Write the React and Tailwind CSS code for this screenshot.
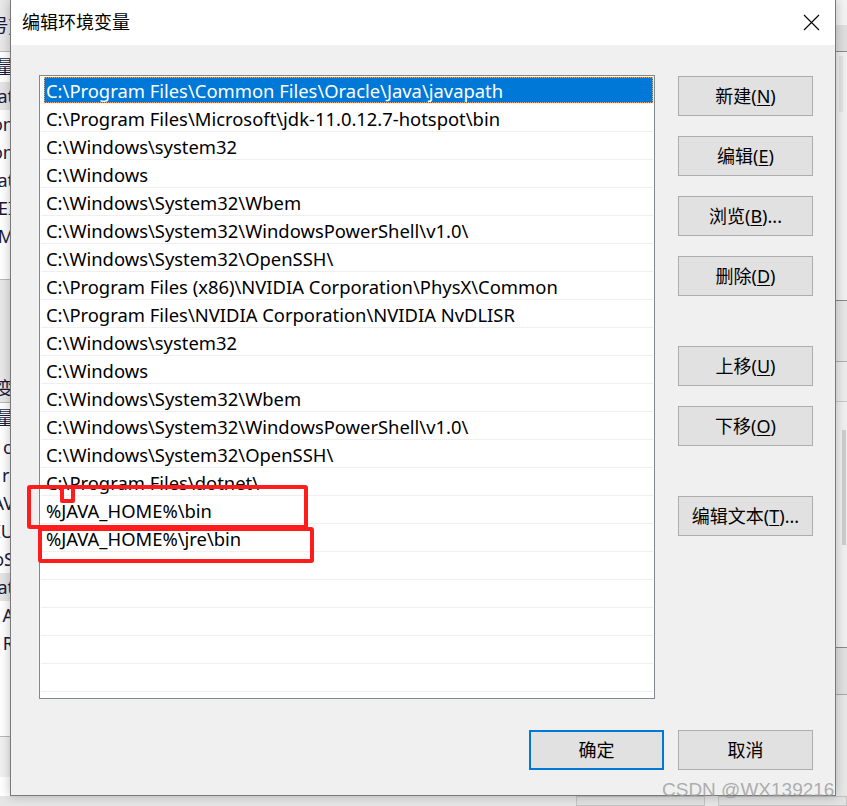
import React from 'react';

const PATHS = [
  'C:\\Program Files\\Common Files\\Oracle\\Java\\javapath',
  'C:\\Program Files\\Microsoft\\jdk-11.0.12.7-hotspot\\bin',
  'C:\\Windows\\system32',
  'C:\\Windows',
  'C:\\Windows\\System32\\Wbem',
  'C:\\Windows\\System32\\WindowsPowerShell\\v1.0\\',
  'C:\\Windows\\System32\\OpenSSH\\',
  'C:\\Program Files (x86)\\NVIDIA Corporation\\PhysX\\Common',
  'C:\\Program Files\\NVIDIA Corporation\\NVIDIA NvDLISR',
  'C:\\Windows\\system32',
  'C:\\Windows',
  'C:\\Windows\\System32\\Wbem',
  'C:\\Windows\\System32\\WindowsPowerShell\\v1.0\\',
  'C:\\Windows\\System32\\OpenSSH\\',
  'C:\\Program Files\\dotnet\\',
  '%JAVA_HOME%\\bin',
  '%JAVA_HOME%\\jre\\bin',
  '', '', '', '', '', '',
];

const SIDE_BUTTONS = [
  { label: '新建', key: 'N', gap: false },
  { label: '编辑', key: 'E', gap: false },
  { label: '浏览', key: 'B', tail: '...', gap: false },
  { label: '删除', key: 'D', gap: false },
  { label: '上移', key: 'U', gap: true },
  { label: '下移', key: 'O', gap: false },
  { label: '编辑文本', key: 'T', tail: '...', gap: true },
];

const FONT = "font-['Noto_Sans','Noto_Sans_CJK_SC',sans-serif]";

function WinButton({ children, primary, className = '' }) {
  return (
    <div
      className={`w-[135px] h-[40px] flex items-center justify-center bg-[#e1e1e1] text-[18px] text-black ${
        primary ? 'border-2 border-[#0078d7]' : 'border border-[#adadad]'
      } ${className}`}
    >
      {children}
    </div>
  );
}

function LeftStrip() {
  const rows = [
    { t: '号)', h: 52, bg: 'bg-[#e8e8e8]', line: true },
    { t: '变量', h: 30, bg: 'bg-white' },
    { t: 'at', h: 28, bg: 'bg-[#e5e5e5]' },
    { t: 'on', h: 28 },
    { t: 'on', h: 28 },
    { t: 'at', h: 28 },
    { t: 'EI', h: 28 },
    { t: 'M', h: 28 },
    { t: '', h: 30, line: true },
    { t: '', h: 95, bg: 'bg-[#e8e8e8]' },
    { t: '变', h: 28, bg: 'bg-[#e8e8e8]', line: true },
    { t: '变量', h: 30 },
    { t: 'o', h: 28 },
    { t: 'ri', h: 28 },
    { t: 'AV', h: 28 },
    { t: 'IU', h: 28 },
    { t: 'oS', h: 28 },
    { t: 'at', h: 28, bg: 'bg-[#e5e5e5]' },
    { t: 'A', h: 28 },
    { t: 'R', h: 28 },
    { t: '', h: 80, line: true },
    { t: '', h: 40, bg: 'bg-[#f0f0f0]' },
  ];
  return (
    <div className="w-[10px] shrink-0 overflow-hidden bg-white flex flex-col">
      {rows.map((r, i) => (
        <div
          key={i}
          style={{ height: r.h }}
          className={`shrink-0 flex items-center justify-end overflow-hidden whitespace-nowrap text-[18px] text-[#1a1a3a] ${
            r.bg || 'bg-white'
          } ${r.line ? 'border-b border-[#b8b8b8]' : ''}`}
        >
          <span className="-mr-[4px]">{r.t}</span>
        </div>
      ))}
    </div>
  );
}

function RightStrip() {
  return (
    <div className="w-[11px] shrink-0 flex flex-col bg-[#f0f0f0]">
      <div className="h-[25px] bg-[#f3f3f3]" />
      <div className="h-[27px] bg-[#dedede] border-b border-[#8a8a8a]" />
      <div className="h-[248px] bg-[#f0f0f0] flex pl-[3px] pt-[4px]">
        <div className="w-[4px] h-[56px] bg-[#e2e2e2]" />
      </div>
      <div className="h-[62px] bg-[#e6e6e6] border-t border-[#8a8a8a] border-b border-b-[#b0b0b0]" />
      <div className="h-[40px] bg-[#ececec] border-b border-[#c8c8c8]" />
      <div className="h-[245px] bg-[#f0f0f0] flex justify-end pr-[1px] pt-[28px]">
        <div className="w-[4px] h-[115px] bg-[#cdcdcd]" />
      </div>
      <div className="h-[48px] bg-[#e0e0e0] border-t border-[#8a8a8a] border-b border-b-[#a8a8a8]" />
      <div className="flex-1 bg-[#e8e8e8]" />
    </div>
  );
}

export default function App() {
  return (
    <div className={`w-[847px] h-[806px] overflow-hidden relative bg-[#e6e6e6] ${FONT}`}>
      <div className="flex h-[796px]">
        <LeftStrip />

        {/* dialog */}
        <div className="w-[826px] shrink-0 flex flex-col border-l border-r border-b border-[#7a7a7a] bg-[#f0f0f0] shadow-[0_0_10px_rgba(0,0,0,0.25)] z-10">
          <div className="h-[45px] bg-white flex items-center justify-between pl-[11px] pr-[15px]">
            <span className="text-[18px] text-black -mt-[1px]">编辑环境变量</span>
            <svg width="17" height="17" viewBox="0 0 17 17">
              <path d="M1 1 L16 16 M16 1 L1 16" stroke="#000" strokeWidth="1.1" />
            </svg>
          </div>

          <div className="flex pl-[28px] pt-[30px]">
            {/* list */}
            <div className="w-[616px] h-[624px] border border-[#828790] bg-white overflow-hidden flex flex-col">
              {PATHS.map((p, i) => (
                <div
                  key={i}
                  className="h-[28px] shrink-0 border-b border-[#efefef] mx-[1px] flex"
                >
                  <div
                    className={`flex-1 flex items-center pl-[2px] pt-[2px] whitespace-nowrap text-[18.4px] ${
                      i === 0
                        ? 'ml-[3px] mt-[1px] bg-[#0078d7] text-white outline-1 outline-dotted outline-[#f4a460] -outline-offset-1'
                        : 'ml-[3px] text-black'
                    }`}
                  >
                    {p}
                  </div>
                </div>
              ))}
            </div>

            {/* side buttons */}
            <div className="ml-[23px] pt-[1px] flex flex-col">
              {SIDE_BUTTONS.map((b, i) => (
                <WinButton key={i} className={i === 0 ? '' : b.gap ? 'mt-[50px]' : 'mt-[20px]'}>
                  {b.label}(<span className="underline underline-offset-2">{b.key}</span>){b.tail || ''}
                </WinButton>
              ))}
            </div>
          </div>

          <div className="flex justify-end gap-[14px] pr-[22px] mt-[31px]">
            <WinButton primary>确定</WinButton>
            <WinButton>取消</WinButton>
          </div>
        </div>

        <RightStrip />
      </div>

      {/* bottom strip behind the dialog */}
      <div className="h-[10px] flex bg-[#e6e6e6] pl-[576px] gap-[13px]">
        <div className="w-[136px] h-full border border-[#c4c4c4] bg-[#e1e1e1]" />
        <div className="w-[136px] h-full border border-[#c4c4c4] bg-[#e1e1e1]" />
      </div>

      {/* annotation boxes */}
      <div className="absolute left-[27px] top-[485px] w-[281px] h-[44px] border-[4px] border-[#ff1c1c] rounded-[3px] z-20" />
      <div className="absolute left-[38px] top-[527px] w-[276px] h-[36px] border-[4px] border-[#ff1c1c] rounded-[3px] z-20" />
      <div className="absolute left-[60px] top-[485px] w-[15px] h-[18px] border-[4px] border-[#ff1c1c] rounded-[2px] z-20" />

      {/* watermark */}
      <div className="absolute left-[662px] top-[776px] text-[19px] text-[#9a9a9a]/80 font-['Liberation_Sans',sans-serif] z-20 whitespace-nowrap">
        CSDN @WX139216
      </div>
    </div>
  );
}
